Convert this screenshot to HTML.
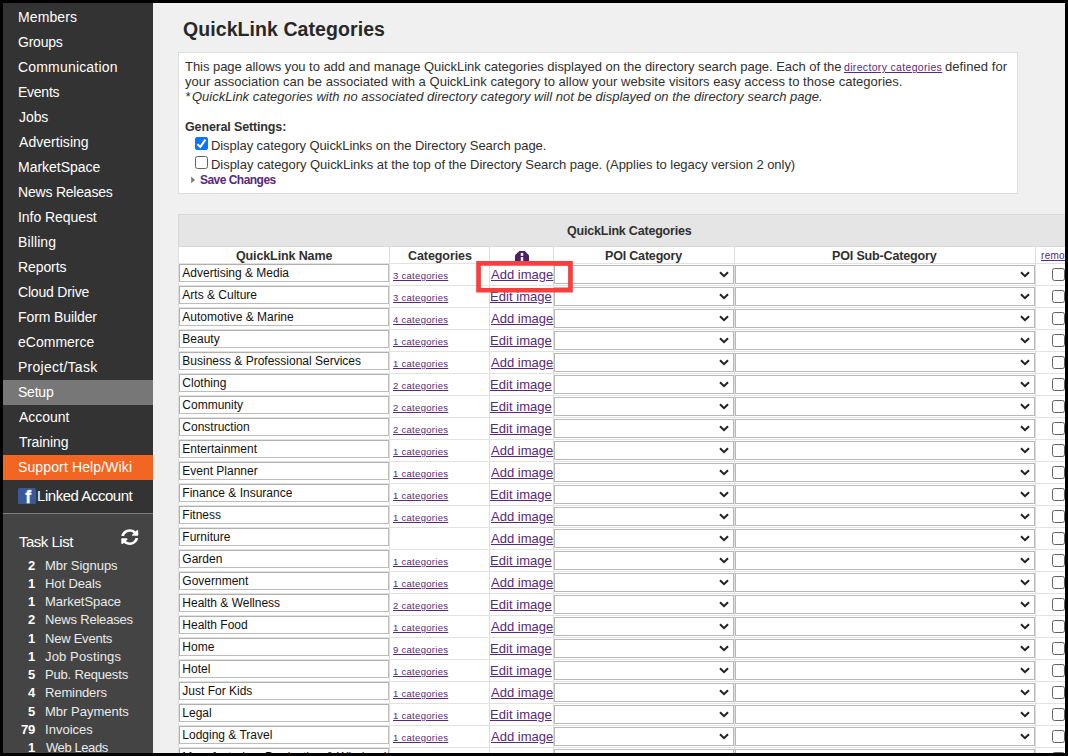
<!DOCTYPE html><html><head><meta charset="utf-8"><title>QuickLink Categories</title><style>html,body{margin:0;padding:0}
body{width:1068px;height:756px;background:#f0f0f0;overflow:hidden;font-family:"Liberation Sans",sans-serif;color:#222}
#frame{position:absolute;left:0;top:0;width:1068px;height:756px;overflow:hidden;background:#f0f0f0}
#bord{position:absolute;left:0;top:0;width:1062px;height:750px;border:3px solid #000;pointer-events:none}
#side{position:absolute;left:0;top:0;width:153px;height:756px;background:#333}
.band{position:absolute;left:0;width:153px;height:25px}
#tasks{position:absolute;left:0;top:513px;width:153px;height:243px;background:#444;border-top:1px solid #7c7c7c}
.abs{position:absolute}
.t{position:absolute;white-space:nowrap;margin:0;color:#303030;font-weight:normal}
h1.t{font-weight:bold}
a.t{color:#57297f;text-decoration:underline}
a.lkb{text-decoration:none;font-weight:bold}
#info{position:absolute;left:178px;top:52px;width:838px;height:140px;background:#fff;border:1px solid #ddd}
.cb{position:absolute;width:11px;height:11px;border:1px solid #626262;border-radius:2.5px;background:#fff}
.cb.on{background:#0b75fd;border-color:#0b75fd;line-height:0;border-radius:2px}
.cb.on svg{position:absolute;left:-1px;top:-1px}
#tbl{position:absolute;left:178px;top:214px;width:900px;height:560px;background:#fff}
#cap{position:absolute;left:178px;top:214px;width:900px;height:31px;background:#e5e5e5;border:1px solid #d9d9d9}
.vs{position:absolute;top:246.500px;width:1px;height:520px;background:#ddd}
.hs{position:absolute;left:178px;width:900px;height:1px;background:#e2e2e2}
.inp{position:absolute;width:208px;height:16px;border:1px solid;border-color:#b0b0b0 #bcbcbc #bcbcbc #b0b0b0;background:#fff}
.sl{position:absolute;height:17px;border:1px solid #b8b8b8;background:#fff}
.ch{position:absolute;right:4px;top:4.500px}
</style></head><body><div id="frame">
<div id="side"></div>
<div class="band" style="top:380px;background:#777"></div>
<div class="band" style="top:455px;background:#f26522"></div>
<div id="tasks"></div>
<span class="t" style="left:18.00px;top:8.00px;font-size:14px;line-height:18px;letter-spacing:0.117px;color:#fff;">Members</span>
<span class="t" style="left:18.00px;top:33.00px;font-size:14px;line-height:18px;letter-spacing:-0.220px;color:#fff;">Groups</span>
<span class="t" style="left:18.00px;top:58.00px;font-size:14px;line-height:18px;letter-spacing:0.183px;color:#fff;">Communication</span>
<span class="t" style="left:18.00px;top:83.00px;font-size:14px;line-height:18px;letter-spacing:-0.250px;color:#fff;">Events</span>
<span class="t" style="left:19.00px;top:108.00px;font-size:14px;line-height:18px;letter-spacing:-0.067px;color:#fff;">Jobs</span>
<span class="t" style="left:19.00px;top:133.00px;font-size:14px;line-height:18px;letter-spacing:0.040px;color:#fff;">Advertising</span>
<span class="t" style="left:18.00px;top:158.00px;font-size:14px;line-height:18px;letter-spacing:-0.025px;color:#fff;">MarketSpace</span>
<span class="t" style="left:18.00px;top:183.00px;font-size:14px;line-height:18px;letter-spacing:-0.204px;color:#fff;">News Releases</span>
<span class="t" style="left:18.00px;top:208.00px;font-size:14px;line-height:18px;letter-spacing:-0.059px;color:#fff;">Info Request</span>
<span class="t" style="left:18.00px;top:233.00px;font-size:14px;line-height:18px;letter-spacing:0.117px;color:#fff;">Billing</span>
<span class="t" style="left:18.00px;top:258.00px;font-size:14px;line-height:18px;letter-spacing:-0.100px;color:#fff;">Reports</span>
<span class="t" style="left:18.00px;top:283.00px;font-size:14px;line-height:18px;letter-spacing:-0.190px;color:#fff;">Cloud Drive</span>
<span class="t" style="left:18.00px;top:308.00px;font-size:14px;line-height:18px;letter-spacing:-0.100px;color:#fff;">Form Builder</span>
<span class="t" style="left:18.00px;top:333.00px;font-size:14px;line-height:18px;letter-spacing:0.012px;color:#fff;">eCommerce</span>
<span class="t" style="left:18.00px;top:358.00px;font-size:14px;line-height:18px;letter-spacing:0.268px;color:#fff;">Project/Task</span>
<span class="t" style="left:18.00px;top:383.00px;font-size:14px;line-height:18px;letter-spacing:-0.225px;color:#fff;">Setup</span>
<span class="t" style="left:19.00px;top:408.00px;font-size:14px;line-height:18px;letter-spacing:-0.050px;color:#fff;">Account</span>
<span class="t" style="left:19.00px;top:433.00px;font-size:14px;line-height:18px;letter-spacing:-0.079px;color:#fff;">Training</span>
<span class="t" style="left:18.00px;top:458.00px;font-size:14px;line-height:18px;letter-spacing:0.125px;color:#fff;">Support Help/Wiki</span>
<svg class="abs" style="left:18px;top:488px" viewBox="0 0 18 16" width="18" height="16"><rect width="18" height="16" rx="1.5" fill="#3b5998"/><text x="7.200" y="14.800" font-family="Liberation Sans, sans-serif" font-weight="bold" font-size="17.500" stroke="#fff" stroke-width="0.300" fill="#fff">f</text></svg>
<span class="t" style="left:37.00px;top:486.00px;font-size:15px;line-height:19px;letter-spacing:-0.458px;color:#fff;">Linked Account</span>
<span class="t" style="left:19.00px;top:532.00px;font-size:15px;line-height:19px;letter-spacing:-0.506px;color:#fff;">Task List</span>
<svg class="abs" style="left:121.200px;top:529px" viewBox="0 0 512 512" width="17.500" height="16.200" preserveAspectRatio="none"><path fill="#fff" d="M370.7 133.300C339.500 104 298.900 88 255.800 88c-77.500.100-144.300 53.200-162.800 126.900-1.300 5.400-6.100 9.200-11.700 9.200H24.100c-7.500 0-13.200-6.800-11.800-14.200C33.900 94.900 134.800 8 256 8c66.400 0 126.800 26.100 171.300 68.700L463 41C478.100 25.900 504 36.600 504 57.900V192c0 13.300-10.700 24-24 24H345.900c-21.400 0-32.100-25.900-17-41l41.800-41.700zM32 296h134.100c21.400 0 32.100 25.900 17 41l-41.800 41.800c31.300 29.300 71.800 45.300 114.900 45.300 77.400-.1 144.300-53.100 162.800-126.800 1.300-5.400 6.100-9.200 11.700-9.200h57.300c7.500 0 13.200 6.800 11.800 14.200C478.100 417.100 377.200 504 256 504c-66.400 0-126.800-26.100-171.300-68.700L49 471c-15.100 15.100-41 4.400-41-16.900V320c0-13.300 10.700-24 24-24z"/></svg>
<span class="t" style="left:28.00px;top:557.00px;font-size:13px;line-height:17px;letter-spacing:-0.050px;font-weight:bold;color:#fff;">2</span>
<span class="t" style="left:45.00px;top:557.00px;font-size:13px;line-height:17px;letter-spacing:-0.040px;color:#ebebeb;">Mbr Signups</span>
<span class="t" style="left:28.00px;top:575.00px;font-size:13px;line-height:17px;letter-spacing:-2.000px;font-weight:bold;color:#fff;">1</span>
<span class="t" style="left:45.00px;top:575.00px;font-size:13px;line-height:17px;letter-spacing:-0.113px;color:#ebebeb;">Hot Deals</span>
<span class="t" style="left:28.00px;top:593.00px;font-size:13px;line-height:17px;letter-spacing:-2.000px;font-weight:bold;color:#fff;">1</span>
<span class="t" style="left:45.00px;top:593.00px;font-size:13px;line-height:17px;letter-spacing:-0.050px;color:#ebebeb;">MarketSpace</span>
<span class="t" style="left:28.00px;top:611.00px;font-size:13px;line-height:17px;letter-spacing:-0.050px;font-weight:bold;color:#fff;">2</span>
<span class="t" style="left:45.00px;top:611.00px;font-size:13px;line-height:17px;letter-spacing:-0.188px;color:#ebebeb;">News Releases</span>
<span class="t" style="left:28.00px;top:630.00px;font-size:13px;line-height:17px;letter-spacing:-2.000px;font-weight:bold;color:#fff;">1</span>
<span class="t" style="left:45.00px;top:630.00px;font-size:13px;line-height:17px;letter-spacing:-0.233px;color:#ebebeb;">New Events</span>
<span class="t" style="left:28.00px;top:648.00px;font-size:13px;line-height:17px;letter-spacing:-2.000px;font-weight:bold;color:#fff;">1</span>
<span class="t" style="left:45.00px;top:648.00px;font-size:13px;line-height:17px;letter-spacing:0.136px;color:#ebebeb;">Job Postings</span>
<span class="t" style="left:28.00px;top:666.00px;font-size:13px;line-height:17px;letter-spacing:-0.300px;font-weight:bold;color:#fff;">5</span>
<span class="t" style="left:45.00px;top:666.00px;font-size:13px;line-height:17px;letter-spacing:-0.179px;color:#ebebeb;">Pub. Requests</span>
<span class="t" style="left:28.00px;top:684.00px;font-size:13px;line-height:17px;letter-spacing:-0.550px;font-weight:bold;color:#fff;">4</span>
<span class="t" style="left:45.00px;top:684.00px;font-size:13px;line-height:17px;letter-spacing:-0.113px;color:#ebebeb;">Reminders</span>
<span class="t" style="left:28.00px;top:703.00px;font-size:13px;line-height:17px;letter-spacing:-0.300px;font-weight:bold;color:#fff;">5</span>
<span class="t" style="left:45.00px;top:703.00px;font-size:13px;line-height:17px;letter-spacing:0.005px;color:#ebebeb;">Mbr Payments</span>
<span class="t" style="left:21.00px;top:721.00px;font-size:13px;line-height:17px;letter-spacing:-0.300px;font-weight:bold;color:#fff;">79</span>
<span class="t" style="left:45.00px;top:721.00px;font-size:13px;line-height:17px;letter-spacing:0.021px;color:#ebebeb;">Invoices</span>
<span class="t" style="left:28.00px;top:739.00px;font-size:13px;line-height:17px;letter-spacing:-2.000px;font-weight:bold;color:#fff;">1</span>
<span class="t" style="left:46.00px;top:739.00px;font-size:13px;line-height:17px;letter-spacing:-0.412px;color:#ebebeb;">Web Leads</span>
<h1 class="t" style="left:183.00px;top:17.00px;font-size:19.5px;line-height:24px;letter-spacing:0.076px;font-weight:bold;color:#282828;">QuickLink Categories</h1>
<div id="info"></div>
<span class="t" style="left:185.00px;top:58.00px;font-size:13px;line-height:17px;letter-spacing:-0.043px;">This page allows you to add and manage QuickLink categories displayed on the directory search page. Each of the</span>
<a href="#" class="t lk" style="left:844.00px;top:60.00px;font-size:10.5px;line-height:14px;letter-spacing:0.329px;">directory categories</a>
<span class="t" style="left:945.00px;top:58.00px;font-size:13px;line-height:17px;letter-spacing:0.075px;">defined for</span>
<span class="t" style="left:185.00px;top:73.00px;font-size:13px;line-height:17px;letter-spacing:0.023px;">your association can be associated with a QuickLink category to allow your website visitors easy access to those categories.</span>
<span class="t" style="left:185.00px;top:88.00px;font-size:13px;line-height:17px;letter-spacing:-0.450px;font-style:italic;">*</span>
<span class="t" style="left:192.00px;top:88.00px;font-size:13px;line-height:17px;letter-spacing:0.005px;font-style:italic;">QuickLink categories with no associated directory category will not be displayed on the directory search page.</span>
<span class="t" style="left:185.00px;top:119.00px;font-size:12.5px;line-height:16px;letter-spacing:-0.134px;font-weight:bold;">General Settings:</span>
<div class="cb on" style="left:195px;top:137px"><svg viewBox="0 0 13 13" width="13" height="13"><path d="M2.400 7.100 L5.300 9.900 L10.400 2.600" fill="none" stroke="#fff" stroke-width="2"/></svg></div>
<span class="t" style="left:211.00px;top:137.00px;font-size:13px;line-height:17px;letter-spacing:-0.077px;">Display category QuickLinks on the Directory Search page.</span>
<div class="cb" style="left:195px;top:156px"></div>
<span class="t" style="left:211.00px;top:156.00px;font-size:13px;line-height:17px;letter-spacing:-0.039px;">Display category QuickLinks at the top of the Directory Search page. (Applies to legacy version 2 only)</span>
<svg class="abs" style="left:191px;top:176px" width="5" height="8" viewBox="0 0 5 8"><path d="M0.200 0.500 L4 3.900 L0.200 7.300Z" fill="#7a7a7a"/></svg>
<a href="#" class="t lkb" style="left:200.00px;top:172.00px;font-size:12px;line-height:16px;letter-spacing:-0.527px;font-weight:bold;">Save Changes</a>
<div id="tbl"></div><div id="cap"></div>
<span class="t" style="left:567.00px;top:223.00px;font-size:12.5px;line-height:16px;letter-spacing:-0.205px;font-weight:bold;">QuickLink Categories</span>
<span class="t" style="left:236.00px;top:248.00px;font-size:12.5px;line-height:16px;letter-spacing:-0.123px;font-weight:bold;">QuickLink Name</span>
<span class="t" style="left:408.00px;top:248.00px;font-size:12.5px;line-height:16px;letter-spacing:-0.078px;font-weight:bold;">Categories</span>
<span class="t" style="left:605.00px;top:248.00px;font-size:12.5px;line-height:16px;letter-spacing:-0.182px;font-weight:bold;">POI Category</span>
<span class="t" style="left:832.00px;top:248.00px;font-size:12.5px;line-height:16px;letter-spacing:-0.150px;font-weight:bold;">POI Sub-Category</span>
<a href="#" class="t lk" style="left:1041.00px;top:249.00px;font-size:10px;line-height:13px;letter-spacing:0.300px;">remove</a>
<svg class="abs" style="left:514px;top:250px" width="16" height="16" viewBox="514 250 16 16"><path fill="#4b1e68" d="M519.300 251H524.800L529 255.200V263H515V255.200Z"/><rect x="520.800" y="252.900" width="2.400" height="3" fill="#fff"/><rect x="520.800" y="257.100" width="2.400" height="5.900" fill="#fff"/></svg>
<div class="vs" style="left:178px"></div>
<div class="vs" style="left:389px"></div>
<div class="vs" style="left:489px"></div>
<div class="vs" style="left:553px"></div>
<div class="vs" style="left:734px"></div>
<div class="vs" style="left:1035px"></div>
<div class="hs" style="top:263px"></div>
<div class="hs" style="top:285px"></div>
<div class="inp" style="left:179px;top:264px"></div>
<span class="t" style="left:182.30px;top:265.00px;font-size:12px;line-height:16px;color:#111;">Advertising &amp; Media</span>
<a href="#" class="t lk" style="left:393.00px;top:269.00px;font-size:9.5px;line-height:13px;letter-spacing:0.291px;">3 categories</a>
<a href="#" class="t lk" style="left:491.00px;top:266.00px;font-size:13px;line-height:17px;letter-spacing:0.013px;">Add image</a>
<div class="sl" style="left:554px;top:265px;width:178px"><svg class="ch" viewBox="0 0 10 7" width="10" height="7"><path d="M1 1.200 L5 5.200 L9 1.200" fill="none" stroke="#222" stroke-width="2"/></svg></div>
<div class="sl" style="left:735px;top:265px;width:298px"><svg class="ch" viewBox="0 0 10 7" width="10" height="7"><path d="M1 1.200 L5 5.200 L9 1.200" fill="none" stroke="#222" stroke-width="2"/></svg></div>
<div class="cb" style="left:1052px;top:268px"></div>
<div class="hs" style="top:307px"></div>
<div class="inp" style="left:179px;top:286px"></div>
<span class="t" style="left:182.30px;top:287.00px;font-size:12px;line-height:16px;color:#111;">Arts &amp; Culture</span>
<a href="#" class="t lk" style="left:393.00px;top:291.00px;font-size:9.5px;line-height:13px;letter-spacing:0.291px;">3 categories</a>
<a href="#" class="t lk" style="left:490.00px;top:288.00px;font-size:13px;line-height:17px;letter-spacing:0.039px;">Edit image</a>
<div class="sl" style="left:554px;top:287px;width:178px"><svg class="ch" viewBox="0 0 10 7" width="10" height="7"><path d="M1 1.200 L5 5.200 L9 1.200" fill="none" stroke="#222" stroke-width="2"/></svg></div>
<div class="sl" style="left:735px;top:287px;width:298px"><svg class="ch" viewBox="0 0 10 7" width="10" height="7"><path d="M1 1.200 L5 5.200 L9 1.200" fill="none" stroke="#222" stroke-width="2"/></svg></div>
<div class="cb" style="left:1052px;top:290px"></div>
<div class="hs" style="top:329px"></div>
<div class="inp" style="left:179px;top:308px"></div>
<span class="t" style="left:182.30px;top:309.00px;font-size:12px;line-height:16px;color:#111;">Automotive &amp; Marine</span>
<a href="#" class="t lk" style="left:393.00px;top:313.00px;font-size:9.5px;line-height:13px;letter-spacing:0.291px;">4 categories</a>
<a href="#" class="t lk" style="left:491.00px;top:310.00px;font-size:13px;line-height:17px;letter-spacing:0.013px;">Add image</a>
<div class="sl" style="left:554px;top:309px;width:178px"><svg class="ch" viewBox="0 0 10 7" width="10" height="7"><path d="M1 1.200 L5 5.200 L9 1.200" fill="none" stroke="#222" stroke-width="2"/></svg></div>
<div class="sl" style="left:735px;top:309px;width:298px"><svg class="ch" viewBox="0 0 10 7" width="10" height="7"><path d="M1 1.200 L5 5.200 L9 1.200" fill="none" stroke="#222" stroke-width="2"/></svg></div>
<div class="cb" style="left:1052px;top:312px"></div>
<div class="hs" style="top:351px"></div>
<div class="inp" style="left:179px;top:330px"></div>
<span class="t" style="left:182.30px;top:331.00px;font-size:12px;line-height:16px;color:#111;">Beauty</span>
<a href="#" class="t lk" style="left:393.00px;top:335.00px;font-size:9.5px;line-height:13px;letter-spacing:0.291px;">1 categories</a>
<a href="#" class="t lk" style="left:490.00px;top:332.00px;font-size:13px;line-height:17px;letter-spacing:0.039px;">Edit image</a>
<div class="sl" style="left:554px;top:331px;width:178px"><svg class="ch" viewBox="0 0 10 7" width="10" height="7"><path d="M1 1.200 L5 5.200 L9 1.200" fill="none" stroke="#222" stroke-width="2"/></svg></div>
<div class="sl" style="left:735px;top:331px;width:298px"><svg class="ch" viewBox="0 0 10 7" width="10" height="7"><path d="M1 1.200 L5 5.200 L9 1.200" fill="none" stroke="#222" stroke-width="2"/></svg></div>
<div class="cb" style="left:1052px;top:334px"></div>
<div class="hs" style="top:373px"></div>
<div class="inp" style="left:179px;top:352px"></div>
<span class="t" style="left:182.30px;top:353.00px;font-size:12px;line-height:16px;color:#111;">Business &amp; Professional Services</span>
<a href="#" class="t lk" style="left:393.00px;top:357.00px;font-size:9.5px;line-height:13px;letter-spacing:0.291px;">1 categories</a>
<a href="#" class="t lk" style="left:491.00px;top:354.00px;font-size:13px;line-height:17px;letter-spacing:0.013px;">Add image</a>
<div class="sl" style="left:554px;top:353px;width:178px"><svg class="ch" viewBox="0 0 10 7" width="10" height="7"><path d="M1 1.200 L5 5.200 L9 1.200" fill="none" stroke="#222" stroke-width="2"/></svg></div>
<div class="sl" style="left:735px;top:353px;width:298px"><svg class="ch" viewBox="0 0 10 7" width="10" height="7"><path d="M1 1.200 L5 5.200 L9 1.200" fill="none" stroke="#222" stroke-width="2"/></svg></div>
<div class="cb" style="left:1052px;top:356px"></div>
<div class="hs" style="top:395px"></div>
<div class="inp" style="left:179px;top:374px"></div>
<span class="t" style="left:182.30px;top:375.00px;font-size:12px;line-height:16px;color:#111;">Clothing</span>
<a href="#" class="t lk" style="left:393.00px;top:379.00px;font-size:9.5px;line-height:13px;letter-spacing:0.291px;">2 categories</a>
<a href="#" class="t lk" style="left:490.00px;top:376.00px;font-size:13px;line-height:17px;letter-spacing:0.039px;">Edit image</a>
<div class="sl" style="left:554px;top:375px;width:178px"><svg class="ch" viewBox="0 0 10 7" width="10" height="7"><path d="M1 1.200 L5 5.200 L9 1.200" fill="none" stroke="#222" stroke-width="2"/></svg></div>
<div class="sl" style="left:735px;top:375px;width:298px"><svg class="ch" viewBox="0 0 10 7" width="10" height="7"><path d="M1 1.200 L5 5.200 L9 1.200" fill="none" stroke="#222" stroke-width="2"/></svg></div>
<div class="cb" style="left:1052px;top:378px"></div>
<div class="hs" style="top:417px"></div>
<div class="inp" style="left:179px;top:396px"></div>
<span class="t" style="left:182.30px;top:397.00px;font-size:12px;line-height:16px;color:#111;">Community</span>
<a href="#" class="t lk" style="left:393.00px;top:401.00px;font-size:9.5px;line-height:13px;letter-spacing:0.291px;">2 categories</a>
<a href="#" class="t lk" style="left:490.00px;top:398.00px;font-size:13px;line-height:17px;letter-spacing:0.039px;">Edit image</a>
<div class="sl" style="left:554px;top:397px;width:178px"><svg class="ch" viewBox="0 0 10 7" width="10" height="7"><path d="M1 1.200 L5 5.200 L9 1.200" fill="none" stroke="#222" stroke-width="2"/></svg></div>
<div class="sl" style="left:735px;top:397px;width:298px"><svg class="ch" viewBox="0 0 10 7" width="10" height="7"><path d="M1 1.200 L5 5.200 L9 1.200" fill="none" stroke="#222" stroke-width="2"/></svg></div>
<div class="cb" style="left:1052px;top:400px"></div>
<div class="hs" style="top:439px"></div>
<div class="inp" style="left:179px;top:418px"></div>
<span class="t" style="left:182.30px;top:419.00px;font-size:12px;line-height:16px;color:#111;">Construction</span>
<a href="#" class="t lk" style="left:393.00px;top:423.00px;font-size:9.5px;line-height:13px;letter-spacing:0.291px;">2 categories</a>
<a href="#" class="t lk" style="left:490.00px;top:420.00px;font-size:13px;line-height:17px;letter-spacing:0.039px;">Edit image</a>
<div class="sl" style="left:554px;top:419px;width:178px"><svg class="ch" viewBox="0 0 10 7" width="10" height="7"><path d="M1 1.200 L5 5.200 L9 1.200" fill="none" stroke="#222" stroke-width="2"/></svg></div>
<div class="sl" style="left:735px;top:419px;width:298px"><svg class="ch" viewBox="0 0 10 7" width="10" height="7"><path d="M1 1.200 L5 5.200 L9 1.200" fill="none" stroke="#222" stroke-width="2"/></svg></div>
<div class="cb" style="left:1052px;top:422px"></div>
<div class="hs" style="top:461px"></div>
<div class="inp" style="left:179px;top:440px"></div>
<span class="t" style="left:182.30px;top:441.00px;font-size:12px;line-height:16px;color:#111;">Entertainment</span>
<a href="#" class="t lk" style="left:393.00px;top:445.00px;font-size:9.5px;line-height:13px;letter-spacing:0.291px;">1 categories</a>
<a href="#" class="t lk" style="left:491.00px;top:442.00px;font-size:13px;line-height:17px;letter-spacing:0.013px;">Add image</a>
<div class="sl" style="left:554px;top:441px;width:178px"><svg class="ch" viewBox="0 0 10 7" width="10" height="7"><path d="M1 1.200 L5 5.200 L9 1.200" fill="none" stroke="#222" stroke-width="2"/></svg></div>
<div class="sl" style="left:735px;top:441px;width:298px"><svg class="ch" viewBox="0 0 10 7" width="10" height="7"><path d="M1 1.200 L5 5.200 L9 1.200" fill="none" stroke="#222" stroke-width="2"/></svg></div>
<div class="cb" style="left:1052px;top:444px"></div>
<div class="hs" style="top:483px"></div>
<div class="inp" style="left:179px;top:462px"></div>
<span class="t" style="left:182.30px;top:463.00px;font-size:12px;line-height:16px;color:#111;">Event Planner</span>
<a href="#" class="t lk" style="left:393.00px;top:467.00px;font-size:9.5px;line-height:13px;letter-spacing:0.291px;">1 categories</a>
<a href="#" class="t lk" style="left:491.00px;top:464.00px;font-size:13px;line-height:17px;letter-spacing:0.013px;">Add image</a>
<div class="sl" style="left:554px;top:463px;width:178px"><svg class="ch" viewBox="0 0 10 7" width="10" height="7"><path d="M1 1.200 L5 5.200 L9 1.200" fill="none" stroke="#222" stroke-width="2"/></svg></div>
<div class="sl" style="left:735px;top:463px;width:298px"><svg class="ch" viewBox="0 0 10 7" width="10" height="7"><path d="M1 1.200 L5 5.200 L9 1.200" fill="none" stroke="#222" stroke-width="2"/></svg></div>
<div class="cb" style="left:1052px;top:466px"></div>
<div class="hs" style="top:505px"></div>
<div class="inp" style="left:179px;top:484px"></div>
<span class="t" style="left:182.30px;top:485.00px;font-size:12px;line-height:16px;color:#111;">Finance &amp; Insurance</span>
<a href="#" class="t lk" style="left:393.00px;top:489.00px;font-size:9.5px;line-height:13px;letter-spacing:0.291px;">1 categories</a>
<a href="#" class="t lk" style="left:490.00px;top:486.00px;font-size:13px;line-height:17px;letter-spacing:0.039px;">Edit image</a>
<div class="sl" style="left:554px;top:485px;width:178px"><svg class="ch" viewBox="0 0 10 7" width="10" height="7"><path d="M1 1.200 L5 5.200 L9 1.200" fill="none" stroke="#222" stroke-width="2"/></svg></div>
<div class="sl" style="left:735px;top:485px;width:298px"><svg class="ch" viewBox="0 0 10 7" width="10" height="7"><path d="M1 1.200 L5 5.200 L9 1.200" fill="none" stroke="#222" stroke-width="2"/></svg></div>
<div class="cb" style="left:1052px;top:488px"></div>
<div class="hs" style="top:527px"></div>
<div class="inp" style="left:179px;top:506px"></div>
<span class="t" style="left:182.30px;top:507.00px;font-size:12px;line-height:16px;color:#111;">Fitness</span>
<a href="#" class="t lk" style="left:393.00px;top:511.00px;font-size:9.5px;line-height:13px;letter-spacing:0.291px;">1 categories</a>
<a href="#" class="t lk" style="left:491.00px;top:508.00px;font-size:13px;line-height:17px;letter-spacing:0.013px;">Add image</a>
<div class="sl" style="left:554px;top:507px;width:178px"><svg class="ch" viewBox="0 0 10 7" width="10" height="7"><path d="M1 1.200 L5 5.200 L9 1.200" fill="none" stroke="#222" stroke-width="2"/></svg></div>
<div class="sl" style="left:735px;top:507px;width:298px"><svg class="ch" viewBox="0 0 10 7" width="10" height="7"><path d="M1 1.200 L5 5.200 L9 1.200" fill="none" stroke="#222" stroke-width="2"/></svg></div>
<div class="cb" style="left:1052px;top:510px"></div>
<div class="hs" style="top:549px"></div>
<div class="inp" style="left:179px;top:528px"></div>
<span class="t" style="left:182.30px;top:529.00px;font-size:12px;line-height:16px;color:#111;">Furniture</span>
<a href="#" class="t lk" style="left:491.00px;top:530.00px;font-size:13px;line-height:17px;letter-spacing:0.013px;">Add image</a>
<div class="sl" style="left:554px;top:529px;width:178px"><svg class="ch" viewBox="0 0 10 7" width="10" height="7"><path d="M1 1.200 L5 5.200 L9 1.200" fill="none" stroke="#222" stroke-width="2"/></svg></div>
<div class="sl" style="left:735px;top:529px;width:298px"><svg class="ch" viewBox="0 0 10 7" width="10" height="7"><path d="M1 1.200 L5 5.200 L9 1.200" fill="none" stroke="#222" stroke-width="2"/></svg></div>
<div class="cb" style="left:1052px;top:532px"></div>
<div class="hs" style="top:571px"></div>
<div class="inp" style="left:179px;top:550px"></div>
<span class="t" style="left:182.30px;top:551.00px;font-size:12px;line-height:16px;color:#111;">Garden</span>
<a href="#" class="t lk" style="left:393.00px;top:555.00px;font-size:9.5px;line-height:13px;letter-spacing:0.291px;">1 categories</a>
<a href="#" class="t lk" style="left:490.00px;top:552.00px;font-size:13px;line-height:17px;letter-spacing:0.039px;">Edit image</a>
<div class="sl" style="left:554px;top:551px;width:178px"><svg class="ch" viewBox="0 0 10 7" width="10" height="7"><path d="M1 1.200 L5 5.200 L9 1.200" fill="none" stroke="#222" stroke-width="2"/></svg></div>
<div class="sl" style="left:735px;top:551px;width:298px"><svg class="ch" viewBox="0 0 10 7" width="10" height="7"><path d="M1 1.200 L5 5.200 L9 1.200" fill="none" stroke="#222" stroke-width="2"/></svg></div>
<div class="cb" style="left:1052px;top:554px"></div>
<div class="hs" style="top:593px"></div>
<div class="inp" style="left:179px;top:572px"></div>
<span class="t" style="left:182.30px;top:573.00px;font-size:12px;line-height:16px;color:#111;">Government</span>
<a href="#" class="t lk" style="left:393.00px;top:577.00px;font-size:9.5px;line-height:13px;letter-spacing:0.291px;">1 categories</a>
<a href="#" class="t lk" style="left:491.00px;top:574.00px;font-size:13px;line-height:17px;letter-spacing:0.013px;">Add image</a>
<div class="sl" style="left:554px;top:573px;width:178px"><svg class="ch" viewBox="0 0 10 7" width="10" height="7"><path d="M1 1.200 L5 5.200 L9 1.200" fill="none" stroke="#222" stroke-width="2"/></svg></div>
<div class="sl" style="left:735px;top:573px;width:298px"><svg class="ch" viewBox="0 0 10 7" width="10" height="7"><path d="M1 1.200 L5 5.200 L9 1.200" fill="none" stroke="#222" stroke-width="2"/></svg></div>
<div class="cb" style="left:1052px;top:576px"></div>
<div class="hs" style="top:615px"></div>
<div class="inp" style="left:179px;top:594px"></div>
<span class="t" style="left:182.30px;top:595.00px;font-size:12px;line-height:16px;color:#111;">Health &amp; Wellness</span>
<a href="#" class="t lk" style="left:393.00px;top:599.00px;font-size:9.5px;line-height:13px;letter-spacing:0.291px;">2 categories</a>
<a href="#" class="t lk" style="left:490.00px;top:596.00px;font-size:13px;line-height:17px;letter-spacing:0.039px;">Edit image</a>
<div class="sl" style="left:554px;top:595px;width:178px"><svg class="ch" viewBox="0 0 10 7" width="10" height="7"><path d="M1 1.200 L5 5.200 L9 1.200" fill="none" stroke="#222" stroke-width="2"/></svg></div>
<div class="sl" style="left:735px;top:595px;width:298px"><svg class="ch" viewBox="0 0 10 7" width="10" height="7"><path d="M1 1.200 L5 5.200 L9 1.200" fill="none" stroke="#222" stroke-width="2"/></svg></div>
<div class="cb" style="left:1052px;top:598px"></div>
<div class="hs" style="top:637px"></div>
<div class="inp" style="left:179px;top:616px"></div>
<span class="t" style="left:182.30px;top:617.00px;font-size:12px;line-height:16px;color:#111;">Health Food</span>
<a href="#" class="t lk" style="left:393.00px;top:621.00px;font-size:9.5px;line-height:13px;letter-spacing:0.291px;">1 categories</a>
<a href="#" class="t lk" style="left:491.00px;top:618.00px;font-size:13px;line-height:17px;letter-spacing:0.013px;">Add image</a>
<div class="sl" style="left:554px;top:617px;width:178px"><svg class="ch" viewBox="0 0 10 7" width="10" height="7"><path d="M1 1.200 L5 5.200 L9 1.200" fill="none" stroke="#222" stroke-width="2"/></svg></div>
<div class="sl" style="left:735px;top:617px;width:298px"><svg class="ch" viewBox="0 0 10 7" width="10" height="7"><path d="M1 1.200 L5 5.200 L9 1.200" fill="none" stroke="#222" stroke-width="2"/></svg></div>
<div class="cb" style="left:1052px;top:620px"></div>
<div class="hs" style="top:659px"></div>
<div class="inp" style="left:179px;top:638px"></div>
<span class="t" style="left:182.30px;top:639.00px;font-size:12px;line-height:16px;color:#111;">Home</span>
<a href="#" class="t lk" style="left:393.00px;top:643.00px;font-size:9.5px;line-height:13px;letter-spacing:0.291px;">9 categories</a>
<a href="#" class="t lk" style="left:490.00px;top:640.00px;font-size:13px;line-height:17px;letter-spacing:0.039px;">Edit image</a>
<div class="sl" style="left:554px;top:639px;width:178px"><svg class="ch" viewBox="0 0 10 7" width="10" height="7"><path d="M1 1.200 L5 5.200 L9 1.200" fill="none" stroke="#222" stroke-width="2"/></svg></div>
<div class="sl" style="left:735px;top:639px;width:298px"><svg class="ch" viewBox="0 0 10 7" width="10" height="7"><path d="M1 1.200 L5 5.200 L9 1.200" fill="none" stroke="#222" stroke-width="2"/></svg></div>
<div class="cb" style="left:1052px;top:642px"></div>
<div class="hs" style="top:681px"></div>
<div class="inp" style="left:179px;top:660px"></div>
<span class="t" style="left:182.30px;top:661.00px;font-size:12px;line-height:16px;color:#111;">Hotel</span>
<a href="#" class="t lk" style="left:393.00px;top:665.00px;font-size:9.5px;line-height:13px;letter-spacing:0.291px;">1 categories</a>
<a href="#" class="t lk" style="left:490.00px;top:662.00px;font-size:13px;line-height:17px;letter-spacing:0.039px;">Edit image</a>
<div class="sl" style="left:554px;top:661px;width:178px"><svg class="ch" viewBox="0 0 10 7" width="10" height="7"><path d="M1 1.200 L5 5.200 L9 1.200" fill="none" stroke="#222" stroke-width="2"/></svg></div>
<div class="sl" style="left:735px;top:661px;width:298px"><svg class="ch" viewBox="0 0 10 7" width="10" height="7"><path d="M1 1.200 L5 5.200 L9 1.200" fill="none" stroke="#222" stroke-width="2"/></svg></div>
<div class="cb" style="left:1052px;top:664px"></div>
<div class="hs" style="top:703px"></div>
<div class="inp" style="left:179px;top:682px"></div>
<span class="t" style="left:182.30px;top:683.00px;font-size:12px;line-height:16px;color:#111;">Just For Kids</span>
<a href="#" class="t lk" style="left:393.00px;top:687.00px;font-size:9.5px;line-height:13px;letter-spacing:0.291px;">1 categories</a>
<a href="#" class="t lk" style="left:491.00px;top:684.00px;font-size:13px;line-height:17px;letter-spacing:0.013px;">Add image</a>
<div class="sl" style="left:554px;top:683px;width:178px"><svg class="ch" viewBox="0 0 10 7" width="10" height="7"><path d="M1 1.200 L5 5.200 L9 1.200" fill="none" stroke="#222" stroke-width="2"/></svg></div>
<div class="sl" style="left:735px;top:683px;width:298px"><svg class="ch" viewBox="0 0 10 7" width="10" height="7"><path d="M1 1.200 L5 5.200 L9 1.200" fill="none" stroke="#222" stroke-width="2"/></svg></div>
<div class="cb" style="left:1052px;top:686px"></div>
<div class="hs" style="top:725px"></div>
<div class="inp" style="left:179px;top:704px"></div>
<span class="t" style="left:182.30px;top:705.00px;font-size:12px;line-height:16px;color:#111;">Legal</span>
<a href="#" class="t lk" style="left:393.00px;top:709.00px;font-size:9.5px;line-height:13px;letter-spacing:0.291px;">1 categories</a>
<a href="#" class="t lk" style="left:490.00px;top:706.00px;font-size:13px;line-height:17px;letter-spacing:0.039px;">Edit image</a>
<div class="sl" style="left:554px;top:705px;width:178px"><svg class="ch" viewBox="0 0 10 7" width="10" height="7"><path d="M1 1.200 L5 5.200 L9 1.200" fill="none" stroke="#222" stroke-width="2"/></svg></div>
<div class="sl" style="left:735px;top:705px;width:298px"><svg class="ch" viewBox="0 0 10 7" width="10" height="7"><path d="M1 1.200 L5 5.200 L9 1.200" fill="none" stroke="#222" stroke-width="2"/></svg></div>
<div class="cb" style="left:1052px;top:708px"></div>
<div class="hs" style="top:747px"></div>
<div class="inp" style="left:179px;top:726px"></div>
<span class="t" style="left:182.30px;top:727.00px;font-size:12px;line-height:16px;color:#111;">Lodging &amp; Travel</span>
<a href="#" class="t lk" style="left:393.00px;top:731.00px;font-size:9.5px;line-height:13px;letter-spacing:0.291px;">1 categories</a>
<a href="#" class="t lk" style="left:491.00px;top:728.00px;font-size:13px;line-height:17px;letter-spacing:0.013px;">Add image</a>
<div class="sl" style="left:554px;top:727px;width:178px"><svg class="ch" viewBox="0 0 10 7" width="10" height="7"><path d="M1 1.200 L5 5.200 L9 1.200" fill="none" stroke="#222" stroke-width="2"/></svg></div>
<div class="sl" style="left:735px;top:727px;width:298px"><svg class="ch" viewBox="0 0 10 7" width="10" height="7"><path d="M1 1.200 L5 5.200 L9 1.200" fill="none" stroke="#222" stroke-width="2"/></svg></div>
<div class="cb" style="left:1052px;top:730px"></div>
<div class="hs" style="top:769px"></div>
<div class="inp" style="left:179px;top:748px"></div>
<span class="t" style="left:182.30px;top:749.00px;font-size:12px;line-height:16px;color:#111;">Manufacturing, Production &amp; Wholesale</span>
<a href="#" class="t lk" style="left:393.00px;top:753.00px;font-size:9.5px;line-height:13px;letter-spacing:0.291px;">1 categories</a>
<a href="#" class="t lk" style="left:490.00px;top:750.00px;font-size:13px;line-height:17px;letter-spacing:0.039px;">Edit image</a>
<div class="sl" style="left:554px;top:749px;width:178px"><svg class="ch" viewBox="0 0 10 7" width="10" height="7"><path d="M1 1.200 L5 5.200 L9 1.200" fill="none" stroke="#222" stroke-width="2"/></svg></div>
<div class="sl" style="left:735px;top:749px;width:298px"><svg class="ch" viewBox="0 0 10 7" width="10" height="7"><path d="M1 1.200 L5 5.200 L9 1.200" fill="none" stroke="#222" stroke-width="2"/></svg></div>
<div class="cb" style="left:1052px;top:752px"></div>
<svg class="abs" style="left:470px;top:255px" width="110" height="45" viewBox="470 255 110 45"><path fill="#f93e3e" fill-rule="evenodd" d="M476.200 261H572.800V292.600H476.200Z M480.900 265.800V288H568.100V265.800Z"/></svg>
</div><div id="bord"></div></body></html>
